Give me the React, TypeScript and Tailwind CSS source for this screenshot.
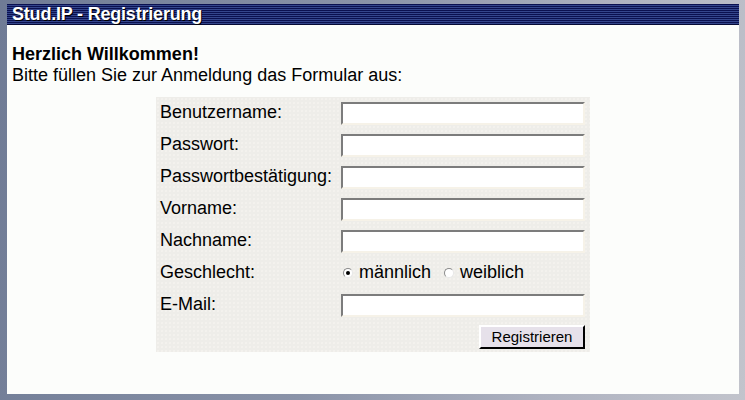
import React from "react";

const fields = [
	{ label: "Benutzername:", type: "text" },
	{ label: "Passwort:", type: "password" },
	{ label: "Passwortbestätigung:", type: "password" },
	{ label: "Vorname:", type: "text" },
	{ label: "Nachname:", type: "text" },
];

function Input({ type }: { type: string }) {
	return (
		<input
			type={type}
			className="w-[244px] h-[23px] bg-white border-2 border-t-[#7c7c7c] border-l-[#7c7c7c] border-b-[#f6f2e8] border-r-[#f6f2e8] outline-none px-1 text-[15px]"
		/>
	);
}

function Radio({ checked }: { checked?: boolean }) {
	return (
		<span className="w-[10px] h-[10px] rounded-full bg-white border border-t-[#8a8a8a] border-l-[#8a8a8a] border-b-[#e8e8e8] border-r-[#e8e8e8] flex items-center justify-center shrink-0">
			{checked && <span className="w-[4px] h-[4px] rounded-full bg-black" />}
		</span>
	);
}

export default function App() {
	return (
		<div className="w-[745px] h-[400px] overflow-hidden pt-[4px] px-[7px] bg-[linear-gradient(100deg,#6f7b95_0%,#8a93a8_45%,#aeb2c0_75%,#c2c4cc_100%)] font-['Liberation_Sans',Arial,sans-serif] text-black">
			<div className="w-[732px] h-[390px] bg-[#fcfdfb] flex flex-col">
				{/* title bar */}
				<div className="h-[21px] flex items-center px-[5px] bg-[repeating-linear-gradient(to_bottom,#0b1150_0px,#0b1150_1px,#34468c_1px,#34468c_2px)] border-b border-[#060a35]">
					<span className="text-[18px] leading-none font-bold text-white tracking-[-0.2px] [text-shadow:1px_1px_0_#000]">
						Stud.IP - Registrierung
					</span>
				</div>

				<div className="pt-[19px] px-[5px] text-[18px] leading-[21px]">
					<p className="font-bold">Herzlich Willkommen!</p>
					<p>Bitte füllen Sie zur Anmeldung das Formular aus:</p>
				</div>

				{/* form */}
				<form className="mt-[11px] ml-[149px] w-[434px] bg-[#eeede9] bg-[radial-gradient(#f8f7f2_0.6px,transparent_0.8px)] bg-[length:4px_4px] pl-[4px] pr-[5px]">
					{fields.map((f) => (
						<div key={f.label} className="h-[32px] flex items-center">
							<label className="w-[181px] text-[18px] leading-none pb-[3px]">{f.label}</label>
							<Input type={f.type} />
						</div>
					))}
					<div className="h-[32px] flex items-center">
						<label className="w-[183px] text-[18px] leading-none pb-[3px]">Geschlecht:</label>
						<div className="flex items-center text-[18px] leading-none">
							<Radio checked />
							<span className="ml-[6px] pb-[2px]">männlich</span>
							<span className="ml-[13px]"><Radio /></span>
							<span className="ml-[6px] pb-[2px]">weiblich</span>
						</div>
					</div>
					<div className="h-[32px] flex items-center">
						<label className="w-[181px] text-[18px] leading-none pb-[3px]">E-Mail:</label>
						<Input type="text" />
					</div>
					<div className="h-[31px] flex items-center justify-end">
						<button
							type="button"
							className="w-[106px] h-[24px] bg-[#e6e1ea] border-2 border-t-white border-l-white border-b-black border-r-black text-[15px] leading-none"
						>
							Registrieren
						</button>
					</div>
				</form>
			</div>
		</div>
	);
}
